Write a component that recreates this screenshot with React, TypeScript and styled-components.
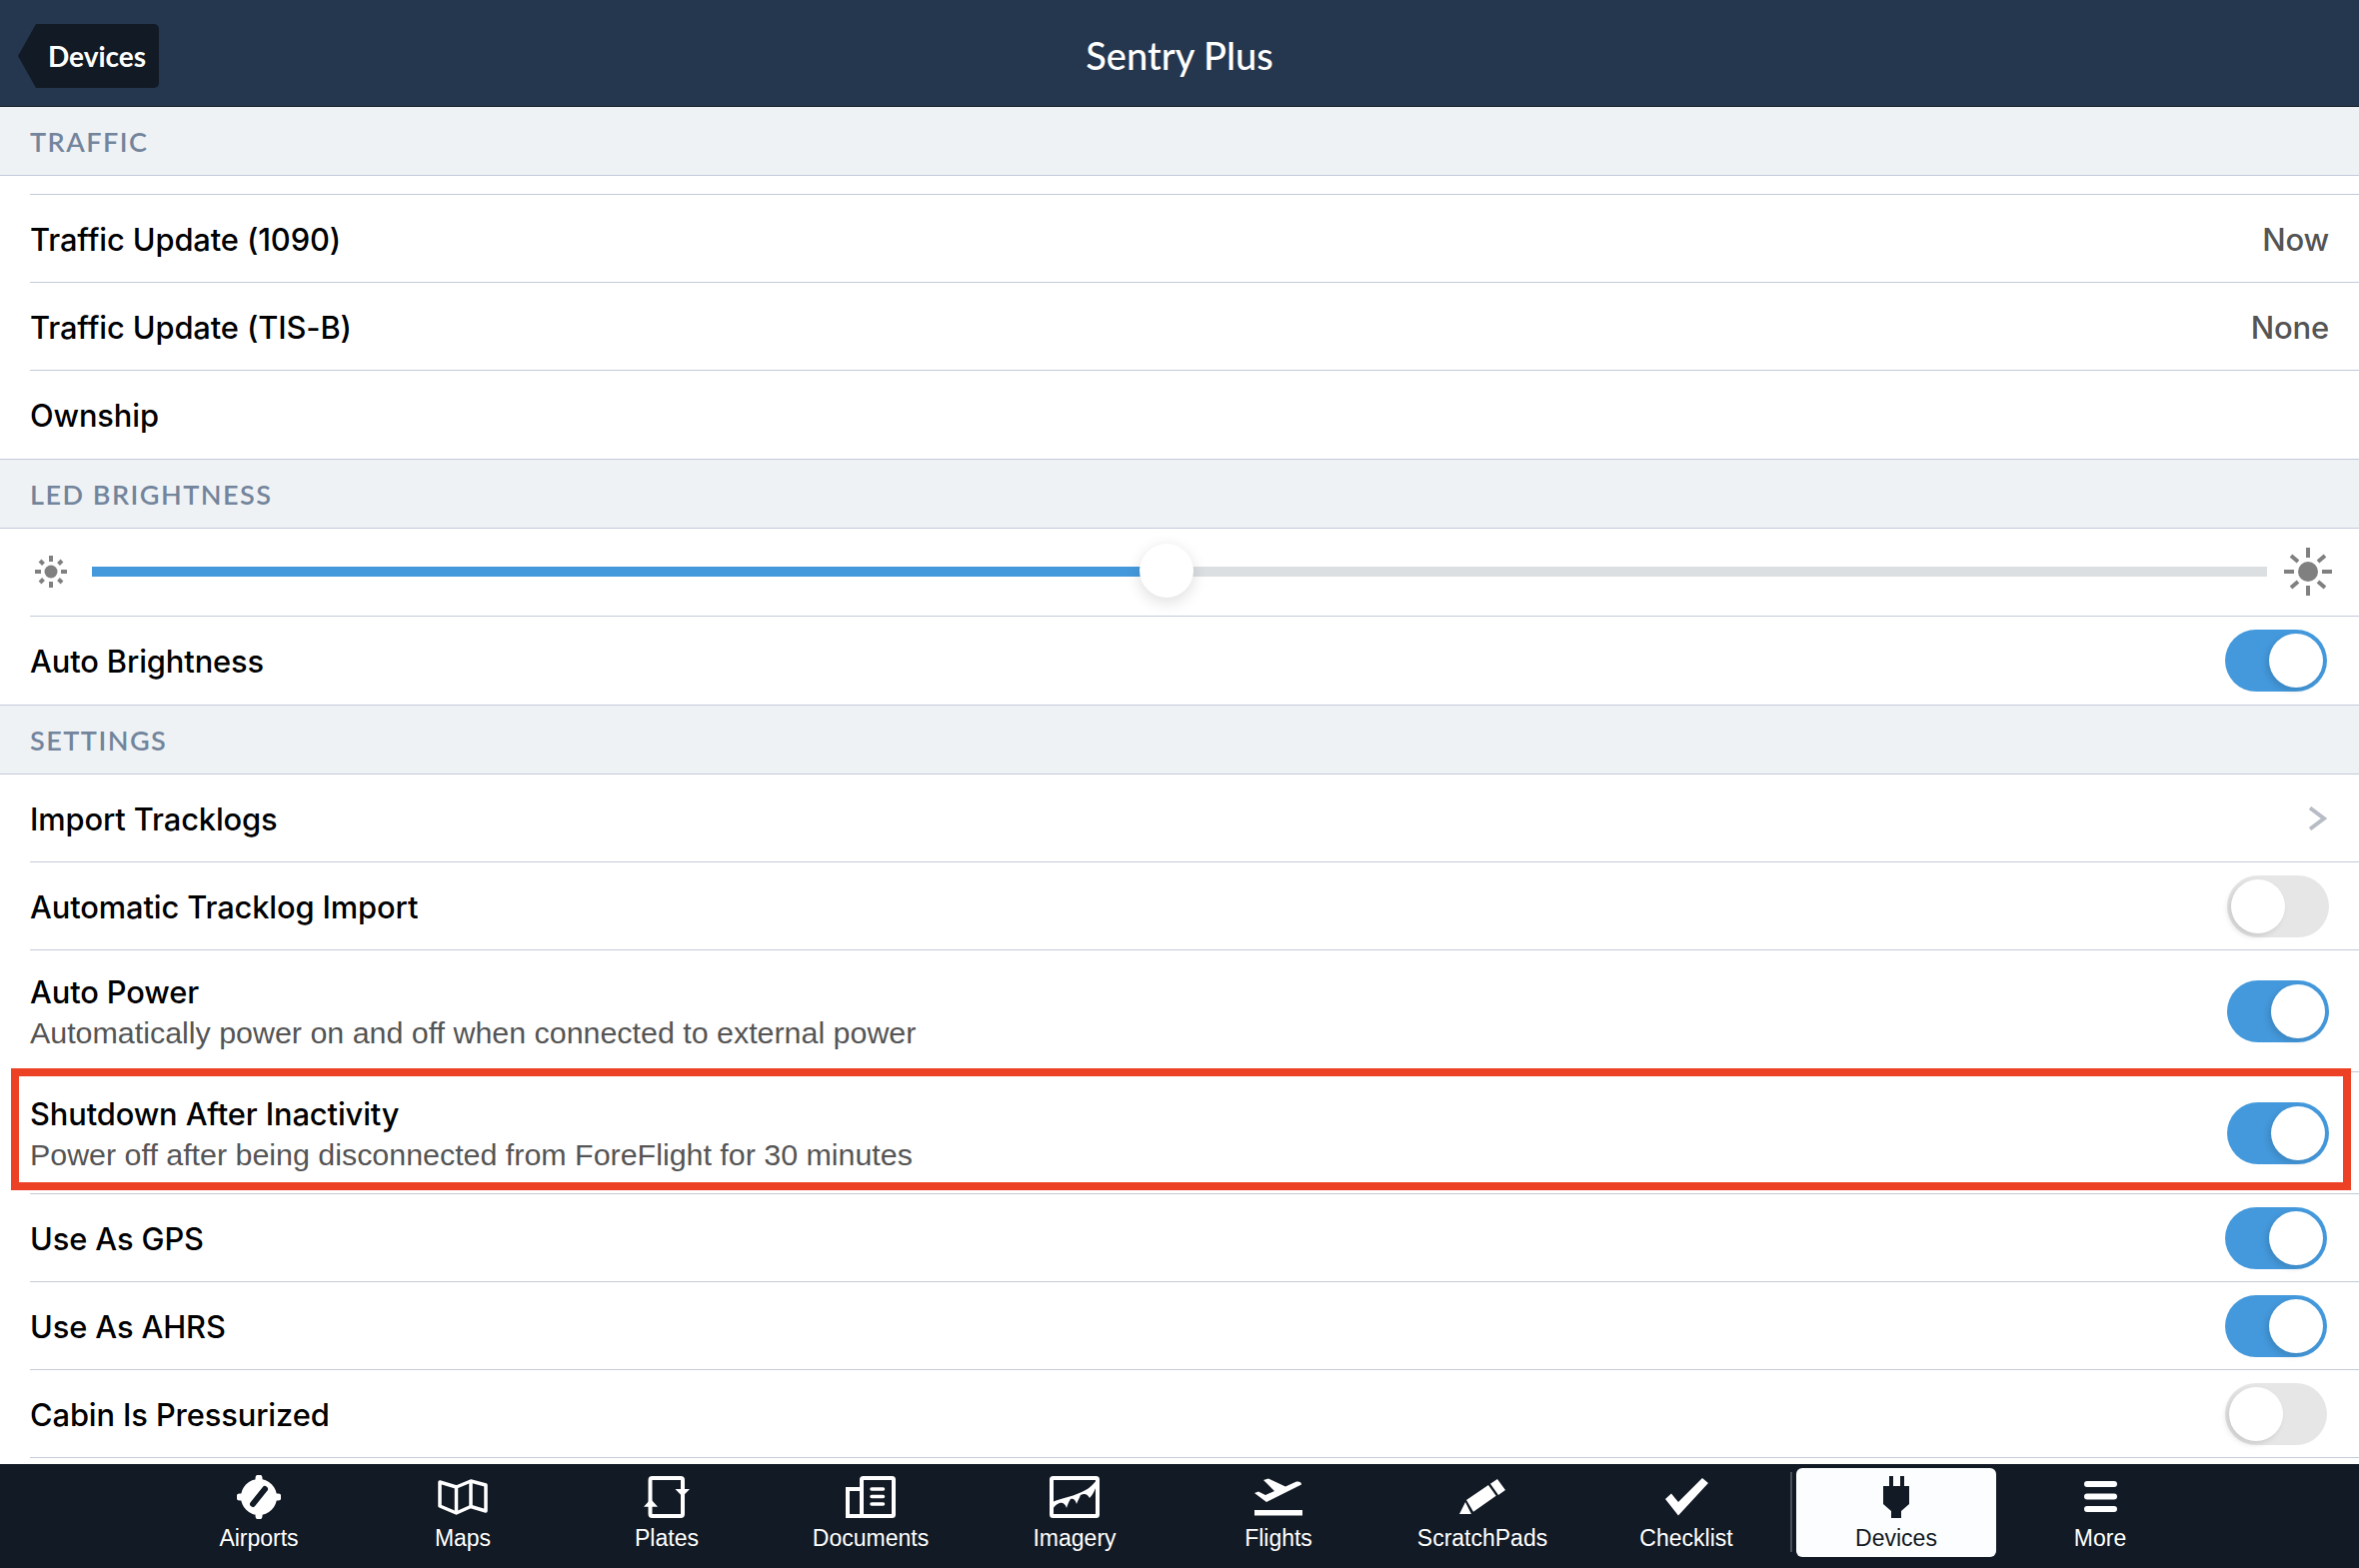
import React from 'react';
import styled, {createGlobalStyle} from "styled-components";

const Global = createGlobalStyle`
  html, body {
    margin: 0;
    padding: 0;
    background: #fff;
  }
  * {
    box-sizing: border-box;
  }
`

const Page = styled.div`
  width: 2360px;
  height: 1569px;
  overflow: hidden;
  display: flex;
  flex-direction: column;
  font-family: "Liberation Sans", Arial, sans-serif;
  background: #fff;
`

const Header = styled.header`
  position: relative;
  height: 107px;
  flex-shrink: 0;
  display: flex;
  align-items: center;
  justify-content: center;
  background: #25374f;
  border-bottom: 1px solid #121a25;
`

const BackButton = styled.div`
  position: absolute;
  left: 18px;
  top: 24px;
  width: 141px;
  height: 64px;
  display: flex;
  align-items: center;
  padding-left: 30px;
  background: #121a25;
  border-radius: 0 5px 5px 0;
  clip-path: polygon(18px 0, 100% 0, 100% 100%, 18px 100%, 0 50%);
  color: #fff;
  font-family: Lato, sans-serif;
  font-size: 28px;
  font-weight: 700;
`

const Title = styled.h1`
  margin: 4px 0 0;
  color: #fff;
  font-family: Lato, sans-serif;
  font-size: 38px;
  font-weight: 500;
`

const Content = styled.div`
  flex: 1;
  min-height: 0;
`

const Section = styled.div<{$first?: boolean}>`
  height: ${p => p.$first ? 69 : 70}px;
  display: flex;
  align-items: center;
  padding-left: 30px;
  background: #eff2f5;
  border-top: ${p => p.$first ? "none" : "1px solid #c3cad9"};
  border-bottom: 1px solid #c3cad9;
  color: #73859c;
  font-family: Lato, sans-serif;
  font-size: 27px;
  font-weight: 600;
  letter-spacing: 1.5px;
`

const Row = styled.div<{$tall?: boolean; $last?: boolean}>`
  position: relative;
  height: ${p => p.$tall ? 122 : 88}px;
  margin-left: 30px;
  padding-right: 30px;
  display: flex;
  align-items: center;
  justify-content: space-between;
  border-bottom: ${p => p.$last ? "none" : "1px solid #c3cad9"};
`

const Spacer = styled.div`
  height: 19px;
  margin-left: 30px;
  border-bottom: 1px solid #c3cad9;
`

const Label = styled.div`
  margin-top: 2px;
  color: #000;
  font-family: Inter, "Liberation Sans", sans-serif;
  font-size: 30.8px;
  font-weight: 500;
  letter-spacing: -0.1px;
  line-height: 40px;
`

const TextStack = styled.div`
  padding-top: 2px;
`

const SubLabel = styled.div`
  color: #555;
  font-size: 30.4px;
  line-height: 41px;
`

const Value = styled.span`
  margin-top: 2px;
  color: #555;
  font-family: Inter, "Liberation Sans", sans-serif;
  font-size: 31px;
  font-weight: 500;
  letter-spacing: -0.2px;
`

const Toggle = styled.div<{$on?: boolean; $shift?: boolean}>`
  width: 102px;
  height: 62px;
  padding: 4px;
  margin-right: ${p => p.$shift ? 2 : 0}px;
  border-radius: 31px;
  display: flex;
  justify-content: ${p => p.$on ? "flex-end" : "flex-start"};
  background: ${p => p.$on ? "#4499dc" : "#e6e6e6"};
`

const Knob = styled.div`
  width: 54px;
  height: 54px;
  border-radius: 50%;
  background: #fff;
  box-shadow: -3px 3px 6px rgba(0, 0, 0, 0.12);
`

const Highlight = styled.div`
  position: absolute;
  left: -19px;
  right: 8px;
  top: -4px;
  bottom: 3px;
  border: 8px solid #ec4124;
  pointer-events: none;
`

const SliderRow = styled.div`
  height: 87px;
  padding: 0 27px 1px 35px;
  display: flex;
  align-items: center;
`

const SliderDivider = styled.div`
  margin-left: 30px;
  border-bottom: 1px solid #c3cad9;
`

const Track = styled.div`
  position: relative;
  flex: 1;
  height: 10px;
  margin: 0 17px 0 25px;
  background: #dcdfe2;
`

const TrackFill = styled.div`
  height: 100%;
  background: #4499dc;
`

const Thumb = styled.div`
  position: absolute;
  top: -23px;
  width: 54px;
  height: 54px;
  margin-left: -27px;
  border-radius: 50%;
  background: #fff;
  box-shadow: 0 4px 16px rgba(0, 0, 0, 0.14);
`

const ChevronWrap = styled.div`
  display: flex;
  margin-right: 2px;
`

const TabBar = styled.nav`
  height: 104px;
  flex-shrink: 0;
  display: flex;
  padding-left: 157px;
  background: #121a25;
`

const Tab = styled.div<{$active?: boolean}>`
  width: ${p => p.$active ? 200 : 204}px;
  height: ${p => p.$active ? 89 : 104}px;
  margin-top: ${p => p.$active ? 4 : 0}px;
  padding-top: ${p => p.$active ? 7 : 11}px;
  display: flex;
  flex-direction: column;
  align-items: center;
  border-radius: 6px;
  background: ${p => p.$active ? "#fcfdfe" : "transparent"};
  color: ${p => p.$active ? "#121a25" : "#fff"};
`

const TabIcon = styled.div`
  height: 44px;
  display: flex;
  align-items: center;
  justify-content: center;
`

const TabLabel = styled.span`
  margin-top: 7px;
  font-size: 23px;
  line-height: 24px;
`

const TabDivider = styled.div`
  width: 2px;
  height: 80px;
  margin: 8px 4px 0 2px;
  background: #4a515c;
`

const MoreTab = styled.div`
  margin-left: 2px;
`

const SunSmall = () => (
    <svg width="32" height="32" viewBox="-16 -16 32 32">
        <circle r="6.5" fill="#808080"/>
        <g stroke="#808080" strokeWidth="4">
            <path d="M0 -16V-10M0 16V10M-16 0H-10M16 0H10"/>
            <path d="M-11 -11L-7.5 -7.5M11 -11L7.5 -7.5M-11 11L-7.5 7.5M11 11L7.5 7.5"/>
        </g>
    </svg>
)

const SunLarge = () => (
    <svg width="48" height="48" viewBox="-24 -24 48 48">
        <circle r="10" fill="#808080"/>
        <g stroke="#808080" strokeWidth="4">
            <path d="M0 -24V-14M0 24V14M-24 0H-14M24 0H14"/>
            <path d="M-17 -16L-10 -10M17 -16L10 -10M-17 16L-10 10M17 16L10 10"/>
        </g>
    </svg>
)

const Chevron = () => (
    <svg width="19" height="24" viewBox="0 0 19 24">
        <path d="M2 1.5L16 12L2 22.5" fill="none" stroke="#b8bcc4" strokeWidth="4"/>
    </svg>
)

const AirportsIcon = () => (
    <svg width="44" height="44" viewBox="0 0 44 44">
        <circle cx="22" cy="22" r="18" fill="currentColor"/>
        <path d="M22 3V41M3 22H41" stroke="currentColor" strokeWidth="7" strokeLinecap="round"/>
        <path d="M16 29L28 14" stroke="#121a25" strokeWidth="6" strokeLinecap="round"/>
    </svg>
)

const MapsIcon = () => (
    <svg width="50" height="36" viewBox="0 0 50 36" fill="none" stroke="currentColor" strokeWidth="3.5" strokeLinejoin="round">
        <path d="M2 3L18.5 8L33 2L48 6V32L33 27.5L18.5 34L2 27Z"/>
        <path d="M18.5 8V34M33 2V27.5"/>
    </svg>
)

const PlatesIcon = () => (
    <svg width="46" height="42" viewBox="0 0 46 42">
        <rect x="6.5" y="2" width="32.5" height="38" rx="2" fill="none" stroke="currentColor" strokeWidth="4"/>
        <path d="M31.5 13H46L38.7 20.5ZM0 30.7H14L7 23Z" fill="currentColor"/>
    </svg>
)

const DocumentsIcon = () => (
    <svg width="50" height="42" viewBox="0 0 50 42" fill="none" stroke="currentColor">
        <rect x="16" y="2" width="32" height="38" rx="1.5" strokeWidth="4"/>
        <path d="M16 13H2V40H16" strokeWidth="4"/>
        <path d="M26 13H37.5M26 20.5H37.5M26 28H37.5" strokeWidth="3.5" strokeLinecap="round"/>
    </svg>
)

const ImageryIcon = () => (
    <svg width="50" height="42" viewBox="0 0 50 42">
        <rect x="2" y="2" width="46" height="38" rx="1.5" fill="none" stroke="currentColor" strokeWidth="4"/>
        <path d="M3 26C12 22 26 20 36 14C40 12 44 8 47 4V10C45 14 44 18 40 22C38 18 35 17 31 19C30 22 28 25 27 28C26 24 24 22 21 23C19 26 18 29 17 32C16 28 13 26 10 27C7 28 5 30 3 33Z" fill="currentColor"/>
    </svg>
)

const FlightsIcon = () => (
    <svg width="48" height="38" viewBox="0 0 48 38" fill="currentColor">
        <path d="M0 15L4 13.5L11 17L20 13L9 2L14 0.5L31 8.5L42 3.5Q47 3 47 6.5L12 24Z"/>
        <rect y="32" width="48" height="5.5"/>
    </svg>
)

const ScratchPadsIcon = () => (
    <svg width="46" height="36" viewBox="0 0 46 36" fill="currentColor">
        <path d="M0 35L6 23L12 35ZM7 21L29 6L36.7 16.7L14 32.7ZM31 4.7L38 0L46 11L39 16Z"/>
    </svg>
)

const ChecklistIcon = () => (
    <svg width="43" height="38" viewBox="0 0 43 38" fill="currentColor">
        <path d="M0 21L6 15.5L13 24L37 0L43 5L13 37.5Z"/>
    </svg>
)

const DevicesIcon = () => (
    <svg width="26" height="42" viewBox="0 0 26 42" fill="currentColor">
        <path d="M6 0H10V12H6ZM17 0H21V12H17Z"/>
        <path d="M0 10H26V28L18 35V42H8V35L0 28Z"/>
    </svg>
)

const MoreIcon = () => (
    <svg width="33" height="32" viewBox="0 0 33 32" stroke="currentColor" strokeWidth="6" strokeLinecap="round">
        <path d="M3 3H30M3 15.5H30M3 28H30"/>
    </svg>
)

const App = () => {
    return (
        <Page>
            <Global/>
            <Header>
                <BackButton>Devices</BackButton>
                <Title>Sentry Plus</Title>
            </Header>
            <Content>
                <Section $first>TRAFFIC</Section>
                <Spacer/>
                <Row><Label>Traffic Update (1090)</Label><Value>Now</Value></Row>
                <Row><Label>Traffic Update (TIS-B)</Label><Value>None</Value></Row>
                <Row $last><Label>Ownship</Label></Row>

                <Section>LED BRIGHTNESS</Section>
                <SliderRow>
                    <SunSmall/>
                    <Track>
                        <TrackFill style={{width: "49.4%"}}/>
                        <Thumb style={{left: "49.4%"}}/>
                    </Track>
                    <SunLarge/>
                </SliderRow>
                <SliderDivider/>
                <Row $last><Label>Auto Brightness</Label><Toggle $on $shift><Knob/></Toggle></Row>

                <Section>SETTINGS</Section>
                <Row><Label>Import Tracklogs</Label><ChevronWrap><Chevron/></ChevronWrap></Row>
                <Row><Label>Automatic Tracklog Import</Label><Toggle><Knob/></Toggle></Row>
                <Row $tall>
                    <TextStack>
                        <Label>Auto Power</Label>
                        <SubLabel>Automatically power on and off when connected to external power</SubLabel>
                    </TextStack>
                    <Toggle $on><Knob/></Toggle>
                </Row>
                <Row $tall>
                    <TextStack>
                        <Label>Shutdown After Inactivity</Label>
                        <SubLabel>Power off after being disconnected from ForeFlight for 30 minutes</SubLabel>
                    </TextStack>
                    <Toggle $on><Knob/></Toggle>
                    <Highlight/>
                </Row>
                <Row><Label>Use As GPS</Label><Toggle $on $shift><Knob/></Toggle></Row>
                <Row><Label>Use As AHRS</Label><Toggle $on $shift><Knob/></Toggle></Row>
                <Row><Label>Cabin Is Pressurized</Label><Toggle $shift><Knob/></Toggle></Row>
            </Content>
            <TabBar>
                <Tab><TabIcon><AirportsIcon/></TabIcon><TabLabel>Airports</TabLabel></Tab>
                <Tab><TabIcon><MapsIcon/></TabIcon><TabLabel>Maps</TabLabel></Tab>
                <Tab><TabIcon><PlatesIcon/></TabIcon><TabLabel>Plates</TabLabel></Tab>
                <Tab><TabIcon><DocumentsIcon/></TabIcon><TabLabel>Documents</TabLabel></Tab>
                <Tab><TabIcon><ImageryIcon/></TabIcon><TabLabel>Imagery</TabLabel></Tab>
                <Tab><TabIcon><FlightsIcon/></TabIcon><TabLabel>Flights</TabLabel></Tab>
                <Tab><TabIcon><ScratchPadsIcon/></TabIcon><TabLabel>ScratchPads</TabLabel></Tab>
                <Tab><TabIcon><ChecklistIcon/></TabIcon><TabLabel>Checklist</TabLabel></Tab>
                <TabDivider/>
                <Tab $active><TabIcon><DevicesIcon/></TabIcon><TabLabel>Devices</TabLabel></Tab>
                <MoreTab>
                    <Tab><TabIcon><MoreIcon/></TabIcon><TabLabel>More</TabLabel></Tab>
                </MoreTab>
            </TabBar>
        </Page>
    );
};

export default App;
